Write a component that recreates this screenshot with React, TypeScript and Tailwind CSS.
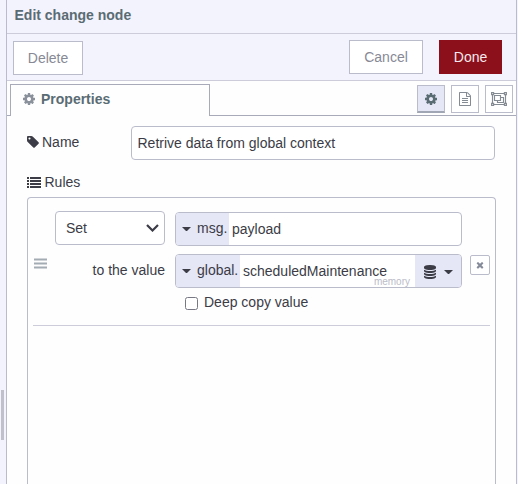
import type { ReactNode } from "react";

const COG =
  "M1152 896q0-106-75-181t-181-75-181 75-75 181 75 181 181 75 181-75 75-181zm512-109v222q0 12-8 23t-20 13l-185 28q-19 54-39 91 35 50 107 138 10 12 10 25t-9 23q-27 37-99 108t-94 71q-12 0-26-9l-138-108q-44 23-91 38-16 136-29 186-7 28-36 28h-222q-14 0-24.5-8.5t-11.5-21.5l-28-184q-49-16-90-37l-141 107q-10 9-25 9-14 0-25-11-126-114-165-168-7-10-7-23 0-12 8-23 15-21 51-66.5t54-70.5q-27-50-41-99l-183-27q-13-2-21-12.5t-8-23.5v-222q0-12 8-23t19-13l186-28q14-46 39-92-40-57-107-138-10-12-10-24 0-10 9-23 26-36 98.5-107.5t94.5-71.5q13 0 26 10l138 107q44-23 91-38 16-136 29-186 7-28 36-28h222q14 0 24.5 8.5t11.5 21.5l28 184q49 16 90 37l142-107q9-9 24-9 13 0 25 10 129 119 165 170 7 8 7 22 0 12-8 23-15 21-51 66.5t-54 70.5q26 50 41 98l183 28q13 2 21 12.5t8 23.5z";
const TAG =
  "M576 448q0-53-37.5-90.5t-90.5-37.5-90.5 37.5-37.5 90.5 37.5 90.5 90.5 37.5 90.5-37.5 37.5-90.5zm1067 576q0 53-37 90l-491 492q-39 37-91 37-53 0-90-37l-715-716q-38-37-64.5-101t-26.5-117v-416q0-52 38-90t90-38h416q53 0 117 26.5t102 64.5l715 714q37 39 37 91z";
const FILE =
  "M1596 380q28 28 48 76t20 88v1152q0 40-28 68t-68 28h-1344q-40 0-68-28t-28-68v-1600q0-40 28-68t68-28h896q40 0 88 20t76 48zm-444-244v376h376q-10-29-22-41l-313-313q-12-12-41-22zm384 1528v-1024h-416q-40 0-68-28t-28-68v-416h-768v1536h1280zm-1024-864q0-14 9-23t23-9h704q14 0 23 9t9 23v64q0 14-9 23t-23 9h-704q-14 0-23-9t-9-23v-64zm736 224q14 0 23 9t9 23v64q0 14-9 23t-23 9h-704q-14 0-23-9t-9-23v-64q0-14 9-23t23-9h704zm0 256q14 0 23 9t9 23v64q0 14-9 23t-23 9h-704q-14 0-23-9t-9-23v-64q0-14 9-23t23-9h704z";
const DATABASE =
  "M896 768q237 0 443-43t325-127v170q0 69-103 128t-280 93.5-385 34.5-385-34.5-280-93.5-103-128v-170q119 84 325 127t443 43zm0 768q237 0 443-43t325-127v170q0 69-103 128t-280 93.5-385 34.5-385-34.5-280-93.5-103-128v-170q119 84 325 127t443 43zm0-384q237 0 443-43t325-127v170q0 69-103 128t-280 93.5-385 34.5-385-34.5-280-93.5-103-128v-170q119 84 325 127t443 43zm0-1152q208 0 385 34.5t280 93.5 103 128v128q0 69-103 128t-280 93.5-385 34.5-385-34.5-280-93.5-103-128v-128q0-69 103-128t280-93.5 385-34.5z";
const REMOVE =
  "M1490 1322q0 40-28 68l-136 136q-28 28-68 28t-68-28l-294-294-294 294q-28 28-68 28t-68-28l-136-136q-28-28-28-68t28-68l294-294-294-294q-28-28-28-68t28-68l136-136q28-28 68-28t68 28l294 294 294-294q28-28 68-28t68 28l136 136q28 28 28 68t-28 68l-294 294 294 294q28 28 28 68z";

function Icon({ d, className }: { d: string; className: string }) {
  return (
    <svg viewBox="0 0 1792 1792" fill="currentColor" className={`shrink-0 ${className}`}>
      <path d={d} />
    </svg>
  );
}

function Caret() {
  return (
    <svg viewBox="0 0 8 4" className="h-[4.5px] w-[9px] shrink-0" fill="currentColor" preserveAspectRatio="none">
      <path d="M0 0h8L4 4z" />
    </svg>
  );
}

function TypedInput({ type, prefixClass, value, children }: { type: string; prefixClass: string; value: string; children?: ReactNode }) {
  return (
    <div className="relative flex h-[34px] w-[287px] overflow-hidden rounded-[4px] border border-[#bbbccb] bg-white">
      <div className={`flex items-center gap-[6.5px] bg-[#e5e6f6] pl-[5.5px] ${prefixClass}`}>
        <Caret />
        <span className="pb-0.5">{type}</span>
      </div>
      <span className="flex flex-1 items-center pl-[3px]">{value}</span>
      {children}
    </div>
  );
}

export default function App() {
  return (
    <div className="flex h-[484px] w-[518px] overflow-hidden bg-[#f3f3fd] font-['Liberation_Sans',Arial,sans-serif] text-[14px] leading-5 text-[#3b3c46]">
      <div className="w-1.5 shrink-0 pt-[390px] pl-px">
        <div className="h-[50px] w-[3px] bg-[#bfc0cb]" />
      </div>
      <main className="flex w-[511px] shrink-0 flex-col border-x border-[#bbbccb] bg-[#fefeff]">
        <header className="h-[34px] border-b border-[#ccccda] bg-[#f3f3fd] pt-[5px] pl-[7.5px] font-bold text-[#5a6c73]">
          Edit change node
        </header>
        <div className="flex h-[47px] items-start border-b border-[#ccccda] bg-[#f3f3fd] pt-1.5 pl-1.5 text-[#878995]">
          <button className="mt-px h-[34px] w-[70px] border border-[#bbbccb] bg-white">Delete</button>
          <button className="ml-[266px] h-[34px] w-[74px] border border-[#bbbccb] bg-white">Cancel</button>
          <button className="ml-4 h-[34px] w-[63px] bg-[#8c101c] text-[#f3e8ec]">Done</button>
        </div>
        <div className="flex h-[35px] shrink-0">
          <div className="w-[3px] border-b border-[#a9aab9]" />
          <div className="mt-[3px] flex w-[200px] items-center border border-b-0 border-[#a9aab9] pb-1 pl-[11px] font-bold text-[#5a6c73]">
            <Icon d={COG} className="mr-[5px] size-[14px] text-[#8a919a]" />
            Properties
          </div>
          <div className="flex flex-1 justify-end gap-1.5 border-b border-[#a9aab9] pt-1 pr-[3px] text-[#858b93]">
            <div className="flex size-7 items-center justify-center border border-b-2 border-[#bbbccb] border-b-[#a1a6b4] bg-[#e5e6f6] text-[#5a6c73]">
              <Icon d={COG} className="size-3.5" />
            </div>
            <div className="flex size-7 items-center justify-center border border-[#bbbccb] bg-white">
              <Icon d={FILE} className="size-3.5" />
            </div>
            <div className="flex size-7 items-center justify-center border border-[#bbbccb] bg-white">
              <svg viewBox="0 0 16 14" className="h-3.5 w-4" fill="none" stroke="currentColor" strokeWidth="1.15">
                <path d="M3 1.5h10M3 12.5h10M1.5 3v8M14.5 3v8" />
                <path d="M.6.6h2v2h-2zM13.400.6h2v2h-2zM.6 11.400h2v2h-2zM13.400 11.400h2v2h-2z" />
                <path d="M3.500 3.500h6v5h-6zM9.500 5.500h3v5h-6v-2" />
              </svg>
            </div>
          </div>
        </div>
        <div className="flex flex-1 flex-col pl-[19px]">
          <div className="mt-2.5 flex h-[34px] pl-px">
            <label className="flex w-[104px] items-center pb-0.5">
              <Icon d={TAG} className="mr-0.5 -ml-px size-3.5" />
              <span>Name</span>
            </label>
            <div className="flex w-[364px] items-center rounded-[4px] border border-[#bbbccb] bg-white pl-[5.5px]">
              Retrive data from global context
            </div>
          </div>
          <div className="mt-3 flex h-5 items-center gap-[3.5px] pl-px">
            <svg viewBox="0 0 14 11" className="h-[11px] w-3.5" fill="currentColor">
              <path d="M0 0h2v2H0zM3 0h11v2H3zM0 3h2v2H0zM3 3h11v2H3zM0 6h2v2H0zM3 6h11v2H3zM0 9h2v2H0zM3 9h11v2H3z" />
            </svg>
            Rules
          </div>
          <div className="mt-[5px] ml-px w-[469px] flex-1 rounded-t-[4px] border border-b-0 border-[#bbbccb] px-[5px]">
            <div className="flex h-[128px] border-b border-[#ccccda]">
              <div className="w-[22px] pt-[60px] pl-px">
                <svg viewBox="0 0 13 11" className="h-[11px] w-[13px]" fill="#a3abb3">
                  <path d="M0 .5h13v2H0zM0 4.500h13v2H0zM0 8.500h13v2H0z" />
                </svg>
              </div>
              <div className="flex flex-col pt-[13px]">
                <div className="flex gap-2.5">
                  <div className="flex h-[34px] w-[110px] items-center justify-between rounded-[4px] border border-[#bbbccb] bg-white pr-[5px] pl-2.5">
                    Set
                    <svg viewBox="0 0 13 8" className="h-2 w-[13px]" fill="none" stroke="currentColor" strokeWidth="2.2">
                      <path d="M1 1l5.500 5.500L12 1" />
                    </svg>
                  </div>
                  <div className="pt-px">
                    <TypedInput type="msg." prefixClass="w-[53px]" value="payload" />
                  </div>
                </div>
                <div className="mt-2 flex gap-2.5">
                  <span className="w-[110px] pt-1.5 text-right">to the value</span>
                  <TypedInput type="global." prefixClass="w-[64px]" value="scheduledMaintenance">
                    <span className="absolute right-[51px] bottom-0 text-[10px] leading-[11px] text-[#bbbcc8]">memory</span>
                    <div className="flex w-[46px] items-center gap-[7px] bg-[#e5e6f6] pt-0.5 pl-2">
                      <Icon d={DATABASE} className="size-3.5" />
                      <Caret />
                    </div>
                  </TypedInput>
                  <div className="mt-px -ml-0.5 flex size-5 items-center justify-center rounded-[2px] border border-[#bbbccb] bg-white">
                    <Icon d={REMOVE} className="size-2.5 text-[#858b99]" />
                  </div>
                </div>
                <div className="mt-1 flex h-5 items-center pl-[130px]">
                  <span className="mt-[3px] size-[13px] rounded-[2.5px] border border-[#777883] bg-white" />
                  <span className="ml-1.5">Deep copy value</span>
                </div>
              </div>
            </div>
          </div>
        </div>
      </main>
      <div className="w-px bg-[#f3f3fd]" />
    </div>
  );
}
